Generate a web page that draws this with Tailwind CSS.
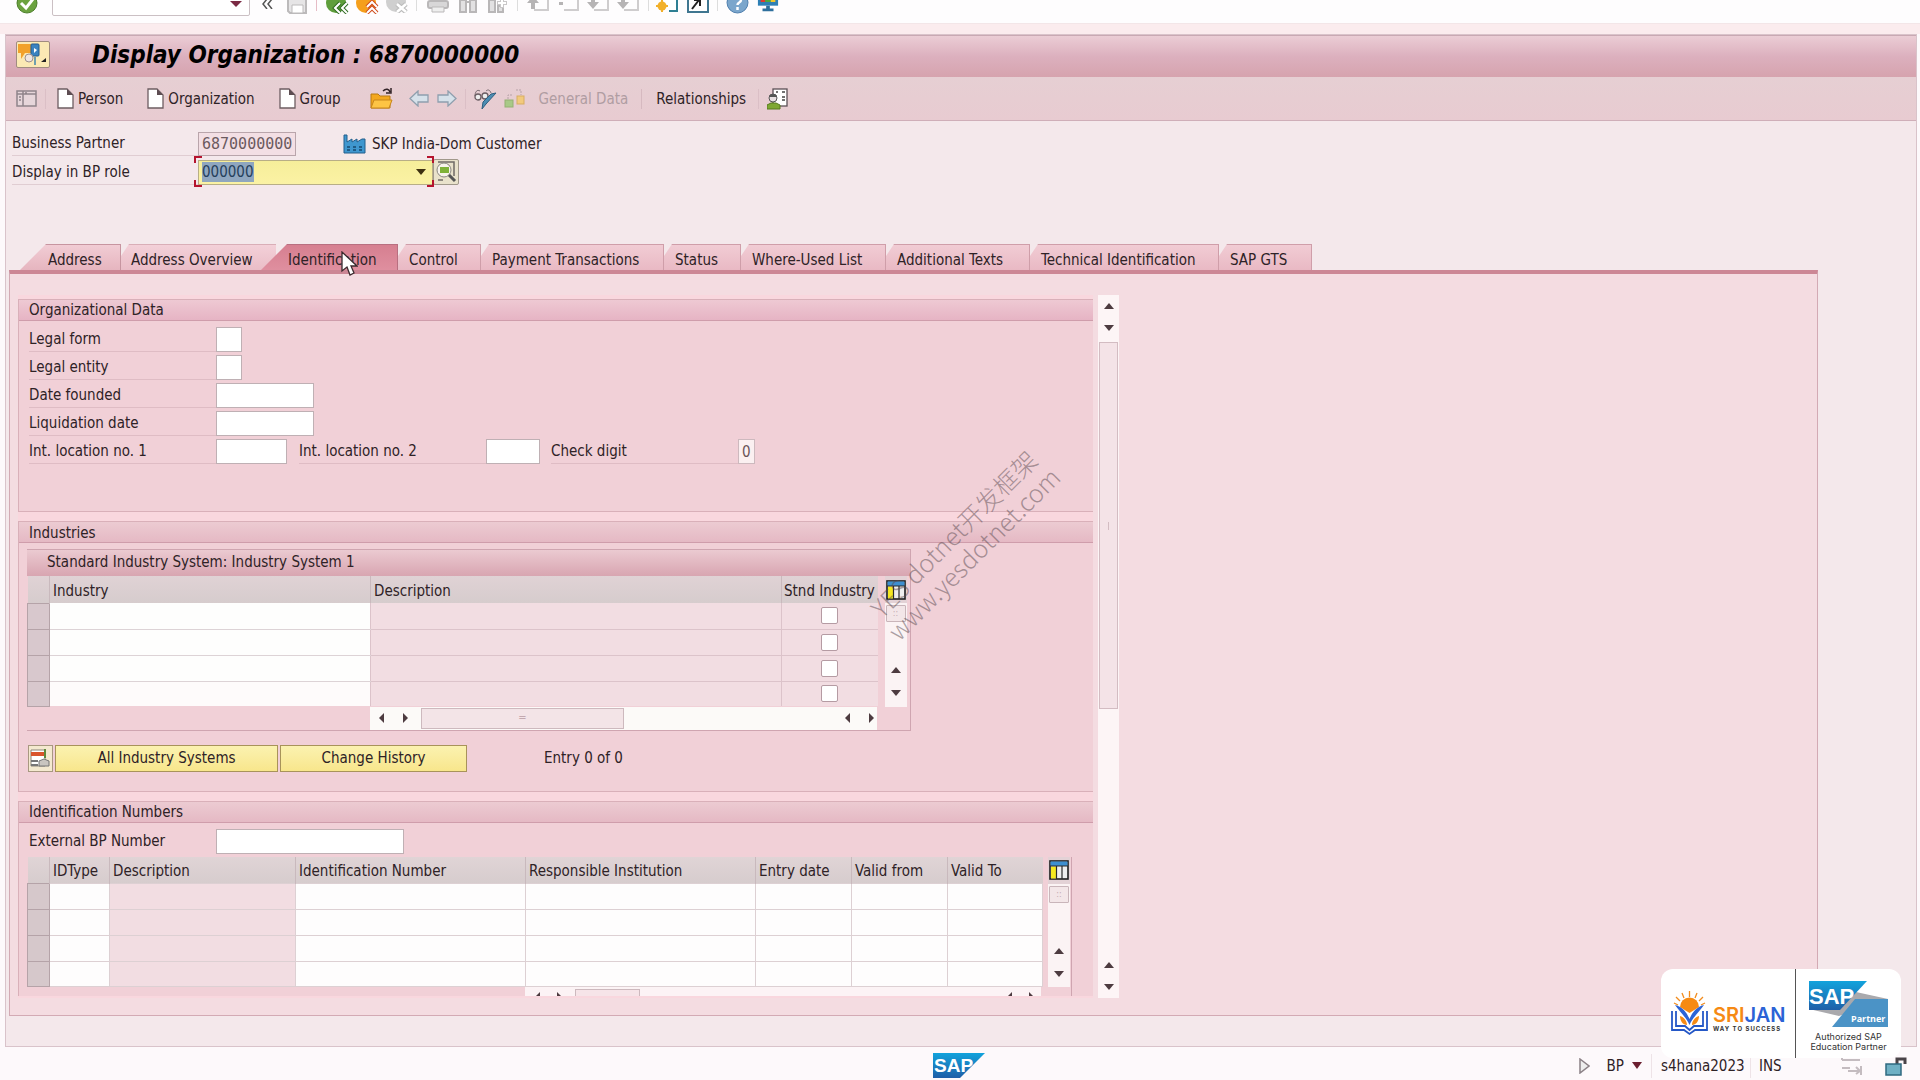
<!DOCTYPE html>
<html lang="en">
<head>
<meta charset="utf-8">
<title>Display Organization : 6870000000</title>
<script src="https://cdn.jsdelivr.net/npm/@tailwindcss/browser@4"></script>
</head>
<body class="bg-[#fdf9fb] text-[#2e2226] font-['DejaVu_Sans_Condensed','DejaVu_Sans',sans-serif] text-[15px] leading-5">
<svg class="absolute h-0 w-0" aria-hidden="true">
  <defs>
    <linearGradient id="sapBlue" x1="0" y1="0" x2="0" y2="1"><stop offset="0" stop-color="#12a3dc"/><stop offset="1" stop-color="#1f5fa8"/></linearGradient>
    <symbol id="doc" viewBox="0 0 17 21"><path d="M1 1H10L16 7V20H1Z" fill="#fff" stroke="#6d5d62" stroke-width="1.3"/><path d="M10 1V7H16Z" fill="#5d4d52"/></symbol>
    <symbol id="grid" viewBox="0 0 20 20"><rect x="1" y="1" width="18" height="18" fill="#eee" stroke="#1d1d1d" stroke-width="1.6"/><rect x="1.5" y="1.5" width="17" height="4.5" fill="#3d8fd0"/><rect x="2" y="6.500" width="5" height="12" fill="#f5e820"/><path d="M7.500 6V19M13 6V19M1 6H19" stroke="#2a2a2a" stroke-width="1.2"/></symbol>
    <symbol id="up" viewBox="0 0 12 8"><path d="M6 1L11 7H1Z" fill="#4d3b40"/></symbol>
    <symbol id="down" viewBox="0 0 12 8"><path d="M6 7L11 1H1Z" fill="#4d3b40"/></symbol>
    <symbol id="left" viewBox="0 0 8 12"><path d="M1 6L6 1V11Z" fill="#4d3b40"/></symbol>
    <symbol id="right" viewBox="0 0 8 12"><path d="M7 6L2 1V11Z" fill="#4d3b40"/></symbol>
    <symbol id="paging" viewBox="0 0 24 22"><path d="M8 21H22V0" fill="none" stroke="#cfcdce" stroke-width="2"/></symbol>
  </defs>
</svg>
<div class="flex min-h-screen flex-col">
  <!-- system toolbar -->
  <header class="flex h-[34px] flex-col overflow-hidden bg-[#fbecee]">
    <div class="flex h-6 items-end overflow-hidden border-b border-[#f3e6e8] bg-[#fefdfe] pl-4">
      <button aria-label="Enter" class="mb-[9px]"><svg class="h-[22px] w-[22px]" viewBox="0 0 22 22"><circle cx="11" cy="11" r="10" fill="#6ba23f" stroke="#4d7f2c"/><path d="M5 11L10 16L17 7" fill="none" stroke="#fff" stroke-width="3"/></svg></button>
      <div class="relative mb-[7px] ml-[14px] h-6">
        <input aria-label="Command" class="h-6 w-[198px] rounded-[2px] border border-[#cbc0c4] bg-white">
        <svg class="absolute top-[6px] right-2 h-[10px] w-[12px]"><path d="M0 3H12L6 9Z" fill="#7a2a44"/></svg>
      </div>
      <button aria-label="Collapse" class="mb-[14px] ml-3"><svg class="h-[14px] w-[11px]" viewBox="0 0 11 14"><path d="M5 4L1 9L5 14M10 4L6 9L10 14" fill="none" stroke="#555" stroke-width="1.5"/></svg></button>
      <button aria-label="Save" class="mb-[9px] ml-[13px]"><svg class="h-5 w-[22px]" viewBox="0 0 22 20"><path d="M2 1H20V19H4L2 17Z" fill="#e6e5e6" stroke="#bcbabb" stroke-width="2"/><path d="M6 11H17V19H6Z" fill="#fff" stroke="#bcbabb"/></svg></button>
      <i class="mb-3 ml-2 h-4 w-px bg-[#e6bcc6]"></i>
      <button aria-label="Back" class="mb-[9px] ml-[9px]"><svg class="h-[22px] w-[23px]" viewBox="0 0 23 22"><circle cx="10" cy="11" r="10" fill="#5f9e3c"/><path d="M14 11L9 16L14 21M21 11L16 16L21 21" fill="none" stroke="#2f6b20" stroke-width="4"/><path d="M14 11L9 16L14 21M21 11L16 16L21 21" fill="none" stroke="#fff" stroke-width="2"/></svg></button>
      <button aria-label="Exit" class="mb-[9px] ml-[7px]"><svg class="h-[22px] w-[23px]" viewBox="0 0 23 22"><circle cx="10" cy="11" r="10" fill="#f59f1c"/><path d="M11 15L16 10L21 15M11 21L16 16L21 21" fill="none" stroke="#cf4a1b" stroke-width="4"/><path d="M11 15L16 10L21 15M11 21L16 16L21 21" fill="none" stroke="#fff" stroke-width="2"/></svg></button>
      <button aria-label="Cancel" class="mb-[10px] ml-[7px]"><svg class="h-[22px] w-[23px]" viewBox="0 0 23 22"><circle cx="10" cy="11" r="10" fill="#cfcfcf"/><path d="M11 13L20 21M20 13L11 21" stroke="#bdbdbd" stroke-width="5"/><path d="M11 13L20 21M20 13L11 21" stroke="#fff" stroke-width="2.500"/></svg></button>
      <i class="mb-3 ml-[7px] h-4 w-px bg-[#ddd]"></i>
      <button aria-label="Print" class="mb-[10px] ml-[10px]"><svg class="h-5 w-[22px]" viewBox="0 0 22 20"><rect x="1" y="8" width="20" height="7" rx="2" fill="#d8d7d8" stroke="#bab8b9" stroke-width="2"/><path d="M5 14H17V19H5Z" fill="#eee" stroke="#bab8b9"/></svg></button>
      <button aria-label="Find" class="mb-[10px] ml-[9px]"><svg class="h-5 w-5" viewBox="0 0 20 20"><path d="M2 19V7H8V19ZM12 19V7H18V19ZM8 9H12" fill="#e2e1e2" stroke="#b9b7b8" stroke-width="2"/></svg></button>
      <button aria-label="Find next" class="mb-[10px] ml-[9px]"><svg class="h-5 w-[22px]" viewBox="0 0 22 20"><path d="M2 19V7H8V19ZM11 19V13H16V19Z" fill="#e2e1e2" stroke="#b9b7b8" stroke-width="2"/><path d="M15 5V15M10 10H20" stroke="#c9c7c8" stroke-width="4"/><path d="M15 6V14M11 10H19" stroke="#fff" stroke-width="2"/></svg></button>
      <i class="mb-3 ml-2 h-4 w-px bg-[#ddd]"></i>
      <button aria-label="First page" class="mb-3 ml-2"><svg class="h-[22px] w-6"><use href="#paging"/><path d="M7 7L13 14H9V20H5V14H1Z" fill="#b6b4b5"/></svg></button>
      <button aria-label="Previous page" class="mb-3 ml-[6px]"><svg class="h-[22px] w-6"><use href="#paging"/><path d="M3 13H7V16H3Z" fill="#b6b4b5"/></svg></button>
      <button aria-label="Next page" class="mb-3 ml-[6px]"><svg class="h-[22px] w-6"><use href="#paging"/><path d="M5 8H9V13H13L7 20L1 13H5Z" fill="#b6b4b5"/></svg></button>
      <button aria-label="Last page" class="mb-3 ml-[6px]"><svg class="h-[22px] w-6"><use href="#paging"/><path d="M5 8H9V13H13L7 20L1 13H5Z" fill="#b6b4b5"/></svg></button>
      <i class="mb-3 ml-2 h-4 w-px bg-[#ddd]"></i>
      <button aria-label="New session" class="mb-[10px] ml-[7px]"><svg class="h-[22px] w-[23px]" viewBox="0 0 23 22"><path d="M13 20H21V2H4" fill="#fff" stroke="#2e7f93" stroke-width="2"/><circle cx="6" cy="15" r="4.500" fill="#f2b02a"/><path d="M6 9V21M0 15H12" stroke="#f2b02a" stroke-width="2"/></svg></button>
      <button aria-label="Create shortcut" class="mb-[10px] ml-[8px]"><svg class="h-[22px] w-[22px]" viewBox="0 0 22 22"><rect x="1" y="1" width="20" height="20" fill="#fff" stroke="#3f7690" stroke-width="2"/><path d="M5 18L12 9M7 9H13V15" fill="none" stroke="#222" stroke-width="2"/></svg></button>
      <i class="mb-3 ml-2 h-4 w-px bg-[#ddd]"></i>
      <button aria-label="Help" class="mb-[9px] ml-[8px]"><svg class="h-[23px] w-[23px]" viewBox="0 0 23 23"><circle cx="11.500" cy="11.500" r="10.500" fill="#7ba6cc" stroke="#4f7fae"/><path d="M8 9C8 4 15 4 15 9C15 12 11.500 11 11.500 14M11.500 16V19" fill="none" stroke="#fff" stroke-width="2.500"/></svg></button>
      <button aria-label="Customize layout" class="mb-[10px] ml-[8px]"><svg class="h-[22px] w-[22px]" viewBox="0 0 24 22"><rect x="1" y="-3" width="22" height="18" fill="#2e7fb5"/><rect x="4" y="-2" width="5" height="13" fill="#e03a2d"/><rect x="9" y="-2" width="6" height="13" fill="#4fa83c"/><rect x="15" y="-2" width="5" height="13" fill="#f0c52c"/><path d="M10 15H14V18H18V21H6V18H10Z" fill="#2e6f9d"/></svg></button>
    </div>
  </header>

  <!-- application window -->
  <main class="mr-[3px] ml-[5px] flex flex-1 flex-col border border-[#d9c3ca] bg-[#f4e8eb]">
    <div class="flex h-[42px] items-center border-t border-[#c9a9b3] bg-linear-to-b from-[#ebcdd5] via-[#dcb0be] to-[#d6a3ae] pb-1 pl-[10px]">
      <button aria-label="Services for object" class="h-[27px] w-[34px] rounded-[2px] border border-[#a08c80] bg-[#fbe9b4]"><svg class="h-[25px] w-8" viewBox="0 0 32 25"><path d="M1 2H14V11H8L4 17V11H1Z" fill="#f2a12b"/><rect x="14" y="2" width="8" height="12" rx="1" fill="#3b83c0" stroke="#245c90"/><path d="M17 6L20 8L17 11Z" fill="#fff"/><circle cx="12" cy="16" r="4" fill="#efe6e2" stroke="#9c9090"/><path d="M18 15V23" stroke="#6f9fae" stroke-width="2"/><path d="M29 16V20H24Z" fill="#222"/></svg></button>
      <h1 class="ml-[42px] text-[24px] leading-7 font-bold whitespace-nowrap text-black italic">Display Organization : 6870000000</h1>
    </div>
    <nav class="flex h-[44px] items-center border-b border-[#cfaeb8] bg-linear-to-b from-[#e6cfd3] to-[#e8cbd1] pl-[10px] whitespace-nowrap">
      <button aria-label="Locator"><svg class="h-[17px] w-[21px]" viewBox="0 0 21 17"><rect x="1" y="1" width="19" height="15" fill="#e6d6da" stroke="#8f848a" stroke-width="1.500"/><path d="M7 1V16M1 4H20M3 7H5M3 10H5M9 3H11" stroke="#8f848a" stroke-width="1.500"/></svg></button>
      <i class="ml-2 h-5 w-px bg-[#dbbfc6]"></i>
      <button class="ml-[11px] flex items-center gap-1"><svg class="h-[21px] w-[17px]"><use href="#doc"/></svg>Person</button>
      <button class="ml-[24px] flex items-center gap-1"><svg class="h-[21px] w-[17px]"><use href="#doc"/></svg>Organization</button>
      <button class="ml-[24px] flex items-center gap-1"><svg class="h-[21px] w-[17px]"><use href="#doc"/></svg>Group</button>
      <button aria-label="Open partner" class="ml-[28px]"><svg class="h-[22px] w-[24px]" viewBox="0 0 24 22"><path d="M2 6H9L11 8H21V20H2Z" fill="#f3a81f" stroke="#b97a12"/><path d="M5 12H23L20 20H2Z" fill="#fdc444" stroke="#c9861a"/><path d="M14 3C17 0 20 1 21 4M22 0V5H17" fill="none" stroke="#332428" stroke-width="1.500"/></svg></button>
      <button aria-label="Previous" class="ml-[16px]"><svg class="h-[17px] w-[20px]" viewBox="0 0 20 17"><path d="M1 8.500L9 1V5H19V12H9V16Z" fill="#d6e1ea" stroke="#8f9fae" stroke-width="1.300"/></svg></button>
      <button aria-label="Next" class="ml-[8px]"><svg class="h-[17px] w-[20px]" viewBox="0 0 20 17"><path d="M19 8.500L11 1V5H1V12H11V16Z" fill="#d6e1ea" stroke="#8f9fae" stroke-width="1.300"/></svg></button>
      <i class="ml-2 h-5 w-px bg-[#dbbfc6]"></i>
      <button aria-label="Display / change" class="ml-[8px]"><svg class="h-[22px] w-[23px]" viewBox="0 0 23 22"><path d="M6 3C3 1 1 4 1 8M12 3C14 1 16 2 17 5" fill="none" stroke="#7a6d72"/><circle cx="4" cy="9" r="3" fill="#eee" stroke="#6a5d62" stroke-width="1.300"/><circle cx="11" cy="8" r="3" fill="#eee" stroke="#6a5d62" stroke-width="1.300"/><path d="M22 5L12 16L8 21L9 14L17 6Z" fill="#4d8db3" stroke="#2e5f80"/></svg></button>
      <button aria-label="Hierarchy" class="ml-[7px]"><svg class="h-[22px] w-[21px]" viewBox="0 0 21 22"><path d="M4 11V7H9M12 2H17V7" fill="none" stroke="#b7a3a8" stroke-dasharray="2 1"/><rect x="1" y="12" width="8" height="7" fill="#a8c987" stroke="#94b072"/><rect x="13" y="8" width="7" height="8" fill="#f2ca7d" stroke="#d8ad62"/></svg></button>
      <button disabled class="ml-[14px] text-[#b09da2]">General Data</button>
      <i class="ml-[13px] h-5 w-px bg-[#d6b9c0]"></i>
      <button class="ml-[14px]">Relationships</button>
      <i class="ml-[12px] h-5 w-px bg-[#dbbfc6]"></i>
      <button aria-label="Business card" class="ml-[8px]"><svg class="h-[22px] w-[21px]" viewBox="0 0 21 22"><rect x="6" y="1" width="14" height="17" fill="#fff" stroke="#5c5056" stroke-width="1.300"/><path d="M15 4H18M15 9H18M15 12H18M9 4H11" stroke="#444" stroke-width="1.300"/><circle cx="6" cy="10" r="4" fill="#e8e0e2" stroke="#555"/><path d="M2 9C2 5 10 5 10 9Z" fill="#555"/><path d="M0 21V17L4 15H9L13 17V21Z" fill="#7ea832" stroke="#56781e"/></svg></button>
    </nav>

    <section class="flex flex-col gap-[3px] pt-[10px] pl-[6px]">
      <div class="flex h-[25px] items-center">
        <label for="bp" class="h-[25px] w-[186px] border-b border-[#e0cdd2] leading-[25px]">Business Partner</label>
        <input id="bp" readonly value="6870000000" class="h-6 w-[98px] border border-[#b9a5ab] bg-[#f3dfe4] pl-[3px] font-['DejaVu_Sans_Mono',monospace] text-[15px] text-[#6b5a5f]">
        <svg class="ml-[47px] h-[20px] w-[23px]" viewBox="0 0 23 20"><path d="M1 19V1H4V8L9 5V8L14 5V8L19 5H22V19Z" fill="#3f97cf" stroke="#235f8c"/><path d="M4 13H7M10 13H13M16 13H19M4 16H7M10 16H13M16 16H19" stroke="#174a70" stroke-width="1.500"/></svg>
        <span class="ml-[6px]">SKP India-Dom Customer</span>
      </div>
      <div class="flex h-[26px] items-center">
        <label for="role" class="h-[26px] w-[186px] border-b border-[#e0cdd2] leading-[26px]">Display in BP role</label>
        <div class="relative">
          <select id="role" class="block h-[25px] w-[235px] appearance-none border border-[#b8ae86] bg-linear-to-b from-[#f6ee9a] to-[#fbf2a4] pl-1 text-transparent"><option>000000</option></select>
          <span class="pointer-events-none absolute top-[2px] left-[4px] bg-[#8fa6bf] text-[#25405c]">000000</span>
          <svg class="pointer-events-none absolute top-[9px] right-[7px] h-[7px] w-[10px]"><path d="M0 0H10L5 6Z" fill="#3d3010"/></svg>
          <svg class="pointer-events-none absolute -top-[4px] -left-[4px] h-8 w-[242px]" viewBox="0 0 242 32" fill="none" stroke="#b5142e" stroke-width="2"><path d="M1 7V1H8M233 1H239V7M1 24V30H8M233 30H239V24"/></svg>
        </div>
        <button aria-label="Role details" class="h-[26px] w-[26px] rounded-[2px] border border-[#a0988a] bg-[#e9e2cb]"><svg class="h-6 w-6" viewBox="0 0 24 24"><path d="M4 2H20V16M4 20H9" fill="none" stroke="#6f6a66" stroke-width="1.500"/><circle cx="10" cy="10" r="7" fill="#f7f3ea" stroke="#8a8780"/><rect x="6" y="7" width="9" height="6" fill="#7fb238"/><path d="M15 15L21 21" stroke="#555" stroke-width="3"/></svg></button>
      </div>
    </section>

    <!-- tabs -->
    <div role="tablist" class="mt-[59px] flex h-[26px] pl-[14px] text-left whitespace-nowrap">
      <button role="tab" class="w-[101px] border-t border-r border-[#c795a0] bg-linear-to-b from-[#f1ccd4] to-[#e6b5bf] pt-1 pl-7 text-left [clip-path:polygon(26px_0,100%_0,100%_100%,0_100%)]">Address</button>
      <button role="tab" class="w-[155px] border-t border-[#d9aeb7] bg-linear-to-b from-[#f3d0d8] to-[#eabdc7] pt-1 pl-[10px] text-left [clip-path:polygon(8px_0,100%_0,100%_100%,0_100%,0_12px)]">Address Overview</button>
      <button role="tab" aria-selected="true" class="z-10 -ml-[15px] w-[137px] border-t border-r border-[#b86f80] bg-linear-to-b from-[#d67f90] to-[#df8f9f] pt-1 pl-[27px] text-left [clip-path:polygon(26px_0,100%_0,100%_100%,0_100%)]">Identification</button>
      <button role="tab" class="w-[83px] border-t border-r border-[#cf9ea9] bg-linear-to-b from-[#f1ccd4] to-[#e9b9c4] pt-1 pl-[11px] text-left [clip-path:polygon(8px_0,100%_0,100%_100%,0_100%,0_12px)]">Control</button>
      <button role="tab" class="w-[183px] border-t border-r border-[#cf9ea9] bg-linear-to-b from-[#f1ccd4] to-[#e9b9c4] pt-1 pl-[11px] text-left [clip-path:polygon(8px_0,100%_0,100%_100%,0_100%,0_12px)]">Payment Transactions</button>
      <button role="tab" class="w-[77px] border-t border-r border-[#cf9ea9] bg-linear-to-b from-[#f1ccd4] to-[#e9b9c4] pt-1 pl-[11px] text-left [clip-path:polygon(8px_0,100%_0,100%_100%,0_100%,0_12px)]">Status</button>
      <button role="tab" class="w-[145px] border-t border-r border-[#cf9ea9] bg-linear-to-b from-[#f1ccd4] to-[#e9b9c4] pt-1 pl-[11px] text-left [clip-path:polygon(8px_0,100%_0,100%_100%,0_100%,0_12px)]">Where-Used List</button>
      <button role="tab" class="w-[144px] border-t border-r border-[#cf9ea9] bg-linear-to-b from-[#f1ccd4] to-[#e9b9c4] pt-1 pl-[11px] text-left [clip-path:polygon(8px_0,100%_0,100%_100%,0_100%,0_12px)]">Additional Texts</button>
      <button role="tab" class="w-[189px] border-t border-r border-[#cf9ea9] bg-linear-to-b from-[#f1ccd4] to-[#e9b9c4] pt-1 pl-[11px] text-left [clip-path:polygon(8px_0,100%_0,100%_100%,0_100%,0_12px)]">Technical Identification</button>
      <button role="tab" class="w-[93px] border-t border-r border-[#cf9ea9] bg-linear-to-b from-[#f1ccd4] to-[#e9b9c4] pt-1 pl-[11px] text-left [clip-path:polygon(8px_0,100%_0,100%_100%,0_100%,0_12px)]">SAP GTS</button>
    </div>

    <section role="tabpanel" class="mr-[98px] mb-[30px] ml-[3px] flex flex-1 border border-t-4 border-[#d3aab4] border-t-[#cc8795] bg-[#f4dce1] pt-[21px] pr-2 pb-[17px] pl-2">
      <div class="flex w-[1075px] flex-col gap-[9px] bg-[#f9d7de] pt-1 whitespace-nowrap">
        <!-- organizational data -->
        <fieldset class="h-[213px] border border-r-0 border-[#d9b0b9] bg-[#f1d0d7]">
          <h2 class="h-[21px] border-b border-[#cf9dab] bg-linear-to-b from-[#eec9d3] to-[#e6b4c4] pl-[10px]">Organizational Data</h2>
          <div class="flex flex-col gap-[3px] pt-[6px] pl-[10px]">
            <div class="flex h-[25px]"><label for="f1" class="w-[187px] border-b border-[#dfbcc4] leading-[25px]">Legal form</label><input id="f1" class="w-[26px] border border-[#bfb0b4] bg-white"></div>
            <div class="flex h-[25px]"><label for="f2" class="w-[187px] border-b border-[#dfbcc4] leading-[25px]">Legal entity</label><input id="f2" class="w-[26px] border border-[#bfb0b4] bg-white"></div>
            <div class="flex h-[25px]"><label for="f3" class="w-[187px] border-b border-[#dfbcc4] leading-[25px]">Date founded</label><input id="f3" class="w-[98px] border border-[#bfb0b4] bg-white"></div>
            <div class="flex h-[25px]"><label for="f4" class="w-[187px] border-b border-[#dfbcc4] leading-[25px]">Liquidation date</label><input id="f4" class="w-[98px] border border-[#bfb0b4] bg-white"></div>
            <div class="flex h-[25px]">
              <label for="f5" class="w-[187px] border-b border-[#dfbcc4] leading-[25px]">Int. location no. 1</label><input id="f5" class="w-[71px] border border-[#bfb0b4] bg-white">
              <label for="f6" class="ml-3 w-[187px] border-b border-[#dfbcc4] leading-[25px]">Int. location no. 2</label><input id="f6" class="w-[54px] border border-[#bfb0b4] bg-white">
              <label for="f7" class="ml-[11px] w-[187px] border-b border-[#dfbcc4] leading-[25px]">Check digit</label><input id="f7" readonly value="0" class="w-[17px] border border-[#cdb9be] bg-[#fbf0f1] pl-[3px] text-[15px] text-[#6b5558]">
            </div>
          </div>
        </fieldset>

        <!-- industries -->
        <fieldset class="border border-r-0 border-[#d9b0b9] bg-[#f1d0d7] pb-[19px]">
          <h2 class="h-[21px] border-b border-[#cf9dab] bg-linear-to-b from-[#eccbd2] to-[#e5b9c4] pl-[10px] leading-[22px]">Industries</h2>
          <div class="mt-[6px] ml-[8px] w-[884px] border-t border-r border-b border-[#cfa5b0]">
            <h3 class="h-[26px] bg-linear-to-b from-[#ebcad1] to-[#d8a5b1] pl-[20px] leading-6">Standard Industry System: Industry System 1</h3>
            <div class="flex">
              <table class="w-[850px] table-fixed border-collapse text-left">
                <colgroup><col class="w-[22px]"><col class="w-[321px]"><col class="w-[411px]"><col class="w-[96px]"></colgroup>
                <thead><tr class="h-[27px] bg-linear-to-b from-[#e0d2d5] to-[#d6cccd]"><th></th><th class="border-l border-[#c9b9bd] pt-[2px] pl-[3px] font-normal">Industry</th><th class="border-l border-[#c9b9bd] pt-[2px] pl-[3px] font-normal">Description</th><th class="border-l border-[#c9b9bd] pt-[2px] pl-[2px] font-normal">Stnd Industry</th></tr></thead>
                <tbody>
                  <tr class="h-[26px]"><td class="border border-[#b5a3a8] bg-[#d8c8cd]"></td><td class="border-b border-[#ddd3d6] bg-[#fefefd]"></td><td class="border-b border-l border-[#dcc3ca] bg-[#f2dde2]"></td><td class="border-b border-l border-[#dcc3ca] bg-[#f2dde2] text-center leading-none"><input type="checkbox" aria-label="Standard industry, row 1" class="inline-block h-[17px] w-[17px] appearance-none rounded-[2px] border border-[#b59ba3] bg-white align-middle"></td></tr>
                  <tr class="h-[26px]"><td class="border border-[#b5a3a8] bg-[#d8c8cd]"></td><td class="border-b border-[#ddd3d6] bg-[#fefefd]"></td><td class="border-b border-l border-[#dcc3ca] bg-[#f2dde2]"></td><td class="border-b border-l border-[#dcc3ca] bg-[#f2dde2] text-center leading-none"><input type="checkbox" aria-label="Standard industry, row 2" class="inline-block h-[17px] w-[17px] appearance-none rounded-[2px] border border-[#b59ba3] bg-white align-middle"></td></tr>
                  <tr class="h-[26px]"><td class="border border-[#b5a3a8] bg-[#d8c8cd]"></td><td class="border-b border-[#ddd3d6] bg-[#fefefd]"></td><td class="border-b border-l border-[#dcc3ca] bg-[#f2dde2]"></td><td class="border-b border-l border-[#dcc3ca] bg-[#f2dde2] text-center leading-none"><input type="checkbox" aria-label="Standard industry, row 3" class="inline-block h-[17px] w-[17px] appearance-none rounded-[2px] border border-[#b59ba3] bg-white align-middle"></td></tr>
                  <tr class="h-[25px]"><td class="border border-[#b5a3a8] bg-[#d8c8cd]"></td><td class="bg-[#fefbfb]"></td><td class="border-l border-[#dcc3ca] bg-[#f2dde2]"></td><td class="border-l border-[#dcc3ca] bg-[#f2dde2] text-center leading-none"><input type="checkbox" aria-label="Standard industry, row 4" class="inline-block h-[17px] w-[17px] appearance-none rounded-[2px] border border-[#b59ba3] bg-white align-middle"></td></tr>
                </tbody>
              </table>
              <div class="ml-[7px] flex w-[22px] flex-col items-center">
                <button aria-label="Configure columns" class="flex h-[27px] w-full items-center justify-center bg-[#e3d2d6]"><svg class="h-5 w-5"><use href="#grid"/></svg></button>
                <div class="flex w-full flex-1 flex-col items-center bg-[#fbf3f4] pt-[2px] pb-[10px]">
                  <div class="h-[17px] w-5 rounded-[1px] border border-[#c9b5ba] bg-[#f3e6e8] text-center text-[9px] leading-[14px] text-[#c3a9b0]">::</div>
                  <svg class="mt-auto h-2 w-3"><use href="#up"/></svg><svg class="mt-[15px] h-2 w-3"><use href="#down"/></svg>
                </div>
              </div>
            </div>
            <div class="ml-[343px] flex h-[23px] w-[507px] items-center bg-[#fcfaf8] pr-[2px] pl-[8px]">
              <svg class="h-3 w-2"><use href="#left"/></svg><svg class="ml-[15px] h-3 w-2"><use href="#right"/></svg>
              <div class="ml-[12px] h-[21px] w-[203px] border border-[#cdb9be] bg-[#f3e4e7] text-center text-[11px] leading-[18px] text-[#c3a9b0]">=</div>
              <svg class="ml-auto h-3 w-2"><use href="#left"/></svg><svg class="ml-[15px] h-3 w-2"><use href="#right"/></svg>
            </div>
          </div>
          <div class="mt-[14px] ml-[9px] flex h-[27px] items-center gap-[2px]">
            <button aria-label="Delete row" class="h-[27px] w-[25px] border border-[#a89880] bg-[#f4e9cf]"><svg class="h-[25px] w-[23px]" viewBox="0 0 23 25"><path d="M2 4H16V20H2Z" fill="#fff" stroke="#8b857a"/><path d="M2 6H15V10H2Z" fill="#d9542c"/><path d="M16 3V12" stroke="#5f8a3c" stroke-width="2"/><path d="M2 15H9M2 19H9" stroke="#777" stroke-width="2"/><path d="M10 20V15L15 13L20 15V20Z" fill="#c9c5c0" stroke="#777"/></svg></button>
            <button class="h-[27px] w-[223px] border border-[#a8935a] bg-linear-to-b from-[#fbf2b0] to-[#f8e68c]">All Industry Systems</button>
            <button class="h-[27px] w-[187px] border border-[#a8935a] bg-linear-to-b from-[#fbf2b0] to-[#f8e68c]">Change History</button>
            <span class="ml-[75px]">Entry 0 of 0</span>
          </div>
        </fieldset>

        <!-- identification numbers -->
        <fieldset class="border-t border-l border-[#d9b0b9] bg-[#f1d0d7]">
          <h2 class="h-[21px] border-b border-[#cf9dab] bg-linear-to-b from-[#eccbd2] to-[#e5b9c4] pl-[10px]">Identification Numbers</h2>
          <div class="mt-[6px] ml-[10px] flex h-[25px]"><label for="ext" class="w-[187px] leading-[25px]">External BP Number</label><input id="ext" class="w-[188px] border border-[#bfb0b4] bg-white"></div>
          <div class="mt-[3px] ml-[8px] w-[1045px] overflow-hidden border-r border-[#cfa5b0]">
            <div class="flex">
              <table class="w-[1015px] table-fixed border-collapse text-left">
                <colgroup><col class="w-[22px]"><col class="w-[60px]"><col class="w-[186px]"><col class="w-[230px]"><col class="w-[230px]"><col class="w-[96px]"><col class="w-[96px]"><col class="w-[95px]"></colgroup>
                <thead><tr class="h-[27px] bg-linear-to-b from-[#e0d4d6] to-[#d6cccd]"><th></th><th class="border-l border-[#c9b9bd] pt-[2px] pl-[3px] font-normal">IDType</th><th class="border-l border-[#c9b9bd] pt-[2px] pl-[3px] font-normal">Description</th><th class="border-l border-[#c9b9bd] pt-[2px] pl-[3px] font-normal">Identification Number</th><th class="border-l border-[#c9b9bd] pt-[2px] pl-[3px] font-normal">Responsible Institution</th><th class="border-l border-[#c9b9bd] pt-[2px] pl-[3px] font-normal">Entry date</th><th class="border-l border-[#c9b9bd] pt-[2px] pl-[3px] font-normal">Valid from</th><th class="border-l border-[#c9b9bd] pt-[2px] pl-[3px] font-normal">Valid To</th></tr></thead>
                <tbody class="[&_td]:border [&_td]:border-[#ddd0d3] [&_td]:bg-[#fefdfd] [&_td:first-child]:border-[#b5a3a8] [&_td:first-child]:bg-[#d6c8cb] [&_td:nth-child(3)]:bg-[#f2dde2]">
                  <tr class="h-[26px]"><td></td><td></td><td></td><td></td><td></td><td></td><td></td><td></td></tr>
                  <tr class="h-[26px]"><td></td><td></td><td></td><td></td><td></td><td></td><td></td><td></td></tr>
                  <tr class="h-[26px]"><td></td><td></td><td></td><td></td><td></td><td></td><td></td><td></td></tr>
                  <tr class="h-[25px]"><td></td><td></td><td></td><td></td><td></td><td></td><td></td><td></td></tr>
                </tbody>
              </table>
              <div class="ml-[5px] flex w-[22px] flex-col items-center">
                <button aria-label="Configure columns" class="flex h-[27px] w-full items-center justify-center bg-[#e3d2d6]"><svg class="h-5 w-5"><use href="#grid"/></svg></button>
                <div class="flex w-full flex-1 flex-col items-center bg-[#fbf3f4] pt-[2px] pb-[9px]">
                  <div class="h-[17px] w-5 rounded-[1px] border border-[#c9b5ba] bg-[#f3e6e8] text-center text-[9px] leading-[14px] text-[#c3a9b0]">::</div>
                  <svg class="mt-auto h-2 w-3"><use href="#up"/></svg><svg class="mt-[15px] h-2 w-3"><use href="#down"/></svg>
                </div>
              </div>
            </div>
            <div class="ml-[498px] flex h-[9px] w-[516px] items-start overflow-hidden bg-[#fcf3f5] pt-[2px] pr-[6px] pl-[9px]">
              <svg class="mt-[2px] h-3 w-2 shrink-0"><use href="#left"/></svg><svg class="mt-[2px] ml-[13px] h-3 w-2 shrink-0"><use href="#right"/></svg>
              <div class="ml-[12px] h-[21px] w-[65px] border border-[#cdb9be] bg-[#f6e4e8]"></div>
              <svg class="mt-[2px] ml-auto h-3 w-2 shrink-0"><use href="#left"/></svg><svg class="mt-[2px] ml-[13px] h-3 w-2 shrink-0"><use href="#right"/></svg>
            </div>
          </div>
        </fieldset>
      </div>

      <!-- panel scrollbar -->
      <div class="ml-[5px] flex w-[21px] flex-col items-center bg-[#fdf5f6] pt-[7px] pb-[7px]">
        <svg class="h-2 w-3 shrink-0"><use href="#up"/></svg><svg class="mt-[14px] h-2 w-3 shrink-0"><use href="#down"/></svg>
        <div class="mt-[10px] flex h-[367px] w-[19px] shrink-0 items-center justify-center border border-[#d3bcc2] bg-[#f4e3e7]"><i class="h-2 w-px bg-[#d3bcc2]"></i></div>
        <svg class="mt-auto h-2 w-3"><use href="#up"/></svg><svg class="mt-[14px] h-2 w-3"><use href="#down"/></svg>
      </div>
    </section>
  </main>

  <!-- status bar -->
  <footer class="relative flex h-[33px] items-center pt-1 pr-[12px]">
    <svg class="absolute top-[6px] left-[933px] h-[25px] w-[52px]" viewBox="0 0 52 25" role="img" aria-label="SAP"><path d="M0 0H52L27 25H0Z" fill="url(#sapBlue)"/><text x="1" y="19" font-family="Liberation Sans" font-weight="bold" font-size="19" fill="#fff">SAP</text></svg>
    <div class="ml-auto flex items-center">
      <button aria-label="Expand status"><svg class="h-4 w-[11px]" viewBox="0 0 11 16"><path d="M1 1L10 8L1 15Z" fill="#eee" stroke="#8b8186" stroke-width="1.500"/></svg></button>
      <button class="ml-[17px] flex items-center gap-2">BP<svg class="h-[7px] w-[10px]"><path d="M0 0H10L5 7Z" fill="#6b1f30"/></svg></button>
      <i class="ml-[9px] h-6 w-px bg-[#eee3e7]"></i>
      <span class="ml-[9px] w-[89px]">s4hana2023</span>
      <i class="h-6 w-px bg-[#eee3e7]"></i>
      <span class="ml-[8px] w-[81px]">INS</span>
      <svg class="h-[18px] w-6" viewBox="0 0 24 18"><path d="M2 3H20M2 3V0M8 14H20M16 10L20 14L16 17M21 9V18M2 11H10" fill="none" stroke="#c4bcc0" stroke-width="2"/></svg>
      <svg class="ml-[21px] h-5 w-[23px]" viewBox="0 0 23 20"><path d="M12 8V3H20V8" fill="none" stroke="#4a4448" stroke-width="3"/><rect x="1" y="8" width="15" height="11" fill="#6fb0c4" stroke="#2f6a80" stroke-width="1.500"/></svg>
    </div>
  </footer>
</div>

<!-- floating layers: partner badge, watermark, mouse pointer -->
<aside class="absolute top-[969px] right-[19px] z-20 flex h-[89px] w-[240px] rounded-xl bg-white">
  <div class="flex w-[135px] items-center border-r border-[#555] pl-[10px]">
    <svg class="h-[45px] w-[37px]" viewBox="0 0 37 45"><path d="M18.500 0V6M11 2L13 7M26 2L24 7M5 6L9 10M32 6L28 10M3 12L7 14M34 12L30 14" stroke="#f28c1d" stroke-width="1.300"/><path d="M9 16A9.500 9.500 0 0 1 28 16L18.500 22Z" fill="#f68a13"/><path d="M4 14C12 16 16 22 18.500 28C21 22 25 16 33 14C29 20 22 26 18.500 34C15 26 8 20 4 14Z" fill="#2b63d6"/><path d="M1 20V39H13L18.500 43L24 39H36V20M5 20V35H14L18.500 39L23 35H32V20" fill="none" stroke="#2558c7" stroke-width="1.800"/><path d="M9 25C13 26 16 30 16 34C12 34 9 30 9 25ZM28 25C24 26 21 30 21 34C25 34 28 30 28 25Z" fill="#f68a13"/></svg>
    <div class="ml-[5px] flex flex-col pt-3 font-['Inter',sans-serif]">
      <div class="text-[20px] leading-[19px] font-semibold"><span class="text-[#f68a13]">SRI</span><span class="text-[#2b63d6]">JAN</span></div>
      <div class="text-[6px] leading-[8px] font-bold tracking-[1px] whitespace-nowrap text-[#333]">WAY TO SUCCESS</div>
    </div>
  </div>
  <div class="flex flex-1 flex-col items-center pt-3 text-center font-['Inter',sans-serif] text-[9px] leading-[10px] text-[#333]">
    <svg class="h-[46px] w-[79px]" viewBox="0 0 79 46" role="img" aria-label="SAP Partner"><path d="M0 28L47 11L79 18L30 35Z" fill="#a9a9ad"/><path d="M0 0H58L31 29H0Z" fill="url(#sapBlue)"/><path d="M46 18H79V46H23Z" fill="#4b93c6"/><text x="0" y="23" font-family="Liberation Sans" font-weight="bold" font-size="22" fill="#fff">SAP</text><text x="42" y="41" font-family="Open Sans" font-weight="bold" font-size="9" fill="#fff">Partner</text></svg>
    <p class="mt-[5px]">Authorized SAP<br>Education Partner</p>
  </div>
</aside>
<div class="pointer-events-none absolute top-[515px] left-[838px] z-20 w-[250px] -rotate-45 text-center font-['Noto_Sans_CJK_SC',sans-serif] text-[25px] leading-7 font-light whitespace-nowrap text-[#5a4a50]/50">YES dotnet开发框架<br>www.yesdotnet.com</div>
<svg class="pointer-events-none absolute top-[251px] left-[341px] z-20 h-[26px] w-[17px]" viewBox="0 0 17 26"><path d="M1 1V20L6 16L9 24L13 22L10 15H16Z" fill="#fff" stroke="#3a2a2e" stroke-width="1.300"/></svg>
</body>
</html>
